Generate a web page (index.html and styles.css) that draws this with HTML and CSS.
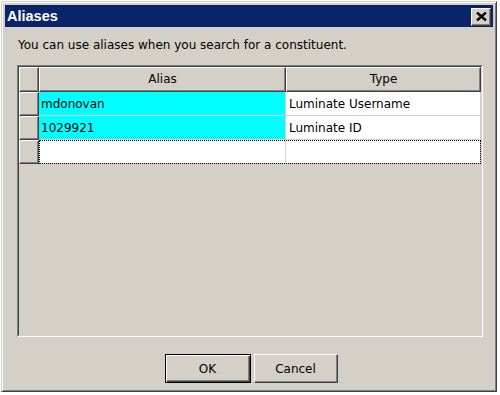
FILE: index.html
```html
<!doctype html>
<html lang="en">
  <head>
    <meta charset="UTF-8" />
    <title>Aliases</title>
    <link rel="stylesheet" href="styles.css">
  </head>
  <body>
    <div class="window">
      <div class="titlebar">
        <span class="title">Aliases</span>
        <button class="close-btn" aria-label="Close">
          <svg width="11" height="9" viewBox="0 0 11 9">
            <path d="M1 0.5 L10 8.5 M10 0.5 L1 8.5" stroke="#000" stroke-width="2.4" fill="none" />
          </svg>
        </button>
      </div>

      <div class="dialog-body">
        <div class="message">You can use aliases when you search for a constituent.</div>

        <div class="grid">
          <div class="grid-inner">
            <div class="row header-row">
              <div class="cell row-head"></div>
              <div class="cell col-head col-alias">Alias</div>
              <div class="cell col-head col-type">Type</div>
            </div>
            <div class="row">
              <div class="cell row-head"></div>
              <div class="cell data col-alias highlight">mdonovan</div>
              <div class="cell data col-type">Luminate Username</div>
            </div>
            <div class="row">
              <div class="cell row-head"></div>
              <div class="cell data col-alias highlight">1029921</div>
              <div class="cell data col-type">Luminate ID</div>
            </div>
            <div class="row">
              <div class="cell row-head"></div>
              <div class="focus-row">
                <div class="cell data col-alias"></div>
                <div class="cell data col-type"></div>
              </div>
            </div>
          </div>
        </div>

        <div class="buttons">
          <button class="btn btn-default">OK</button>
          <button class="btn">Cancel</button>
        </div>
      </div>
    </div>
  </body>
</html>
```

FILE: styles.css
```css
/* Classic Windows dialog look */
body {
  margin: 0;
  width: 500px;
  height: 395px;
  background-color: #ffffff;
  font-family: "DejaVu Sans", sans-serif;
  font-size: 12px;
  color: #000;
  overflow: hidden;
}
.window {
  box-sizing: border-box;
  width: 496px;
  height: 391px;
  margin: 1px 0 0 1px;
  padding: 3px;
  background-color: #d4d0c8;
  border: 1px solid;
  border-color: #d4d0c8 #404040 #404040 #d4d0c8;
  box-shadow: inset 1px 1px #ffffff, inset -1px -1px #808080;
  display: flex;
  flex-direction: column;
}
.titlebar {
  height: 22px;
  background-color: #0a246a;
  display: flex;
  align-items: center;
  justify-content: space-between;
  padding: 0 2px;
}
.title {
  color: #ffffff;
  font-family: "Liberation Sans", sans-serif;
  font-weight: bold;
  font-size: 14.5px;
}
.close-btn {
  box-sizing: border-box;
  width: 20px;
  height: 18px;
  padding: 0;
  margin-top: 1px;
  background-color: #d4d0c8;
  border: 1px solid;
  border-color: #ffffff #404040 #404040 #ffffff;
  box-shadow: inset -1px -1px #808080;
  display: flex;
  align-items: center;
  justify-content: center;
}
.dialog-body {
  flex: 1;
  display: flex;
  flex-direction: column;
  padding: 0 10px 0 12px;
}
.message {
  height: 15px;
  line-height: 15px;
  margin-top: 11px;
  padding-left: 1px;
  white-space: nowrap;
}
/* Sunken grid frame */
.grid {
  box-sizing: border-box;
  height: 272px;
  margin-top: 12px;
  border: 1px solid;
  border-color: #808080 #ffffff #ffffff #808080;
}
.grid-inner {
  box-sizing: border-box;
  height: 100%;
  border: 1px solid;
  border-color: #404040 #d4d0c8 #d4d0c8 #404040;
  background-color: #d4d0c8;
}
.row {
  display: flex;
  height: 24px;
}
.header-row {
  height: 25px;
}
.cell {
  box-sizing: border-box;
  height: 100%;
  display: flex;
  align-items: center;
  white-space: nowrap;
}
.row-head,
.col-head {
  background-color: #d4d0c8;
  border: 1px solid;
  border-color: #ffffff #404040 #404040 #ffffff;
  box-shadow: inset -1px -1px #808080;
}
.row-head {
  width: 20px;
}
.col-head {
  justify-content: center;
  padding-bottom: 1px;
}
.col-alias {
  width: 247px;
}
.col-type {
  width: 195px;
}
.data {
  background-color: #ffffff;
  padding-left: 2px;
  border-right: 1px solid #d4d0c8;
  border-bottom: 1px solid #d4d0c8;
}
.data.col-type {
  padding-left: 3px;
}
.highlight {
  background-color: #00ffff;
}
.focus-row {
  display: flex;
  height: 100%;
  outline: 1px dotted #000;
  outline-offset: -1px;
}
/* Dialog buttons */
.buttons {
  display: flex;
  justify-content: center;
  gap: 3px;
  margin-top: 17px;
  padding-left: 2px;
}
.btn {
  box-sizing: border-box;
  width: 84px;
  height: 29px;
  padding: 0;
  font-family: "DejaVu Sans", sans-serif;
  font-size: 12px;
  color: #000;
  background-color: #d4d0c8;
  border: 1px solid;
  border-color: #ffffff #404040 #404040 #ffffff;
  box-shadow: inset -1px -1px #808080;
}
.btn-default {
  width: 86px;
  border-color: #000;
  box-shadow: inset 1px 1px #ffffff, inset -1px -1px #404040, inset -2px -2px #808080;
}
```
